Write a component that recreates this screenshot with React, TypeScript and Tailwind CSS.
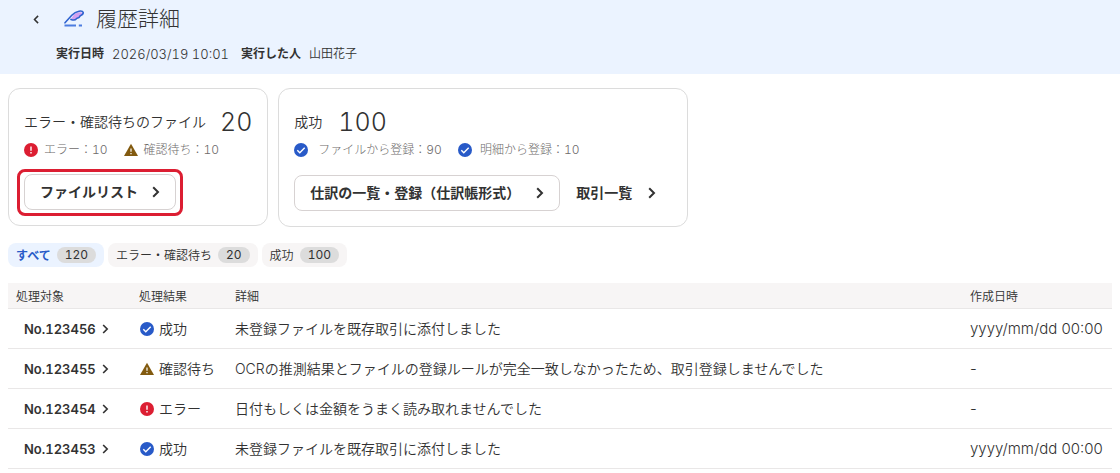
import React from 'react'

type Status = 'success' | 'waiting' | 'error'

const tabs = [
  { label: 'すべて', count: 120, active: true },
  { label: 'エラー・確認待ち', count: 20, active: false },
  { label: '成功', count: 100, active: false },
]

const rows: { no: string; status: Status; detail: string; date: string }[] = [
  { no: 'No.123456', status: 'success', detail: '未登録ファイルを既存取引に添付しました', date: 'yyyy/mm/dd 00:00' },
  { no: 'No.123455', status: 'waiting', detail: 'OCRの推測結果とファイルの登録ルールが完全一致しなかったため、取引登録しませんでした', date: '-' },
  { no: 'No.123454', status: 'error', detail: '日付もしくは金額をうまく読み取れませんでした', date: '-' },
  { no: 'No.123453', status: 'success', detail: '未登録ファイルを既存取引に添付しました', date: 'yyyy/mm/dd 00:00' },
]

const statusLabels: Record<Status, string> = {
  success: '成功',
  waiting: '確認待ち',
  error: 'エラー',
}

function StatusIcon({ status }: { status: Status }) {
  if (status === 'success') {
    return (
      <svg viewBox="0 0 14 14" className="size-3.5 shrink-0" aria-hidden="true">
        <circle cx="7" cy="7" r="7" fill="#285ac8" />
        <path d="M3.3 7.2 5.8 9.7 10.7 4.8" fill="none" stroke="#fff" strokeWidth="1.4" />
      </svg>
    )
  }
  if (status === 'waiting') {
    return (
      <svg viewBox="0 0 14 14" className="size-3.5 shrink-0" aria-hidden="true">
        <path d="M7 .8 14 13H0Z" fill="#825a0f" />
        <path d="M7 5.6V8.7M7 9.9V11.2" stroke="#fff" strokeWidth="1.2" />
      </svg>
    )
  }
  return (
    <svg viewBox="0 0 14 14" className="size-3.5 shrink-0" aria-hidden="true">
      <circle cx="7" cy="7" r="7" fill="#dc1e32" />
      <path d="M7 3.5V7.7M7 9.1V10.5" stroke="#fff" strokeWidth="1.4" />
    </svg>
  )
}

function Chevron({ className }: { className: string }) {
  return (
    <svg viewBox="0 0 8 12" className={className} fill="none" stroke="currentColor" strokeWidth="2" aria-hidden="true">
      <path d="M1.2 1.2 6 6 1.2 10.8" />
    </svg>
  )
}

function FeatherIcon() {
  return (
    <svg viewBox="0 0 20 18" className="w-5 h-[18px]" fill="none" aria-hidden="true">
      <path
        d="M7.2 8.8C8.6 7.6 9 4.2 12.6 3C14.4 2.300 17.600 2 18.600 3C19.300 4 18 5.200 16.600 5.700C15.400 6.200 15.700 7 14.700 7.700C13.700 8.400 12.900 8 12.200 9C11.200 10.300 9 10.200 7.200 8.800Z"
        fill="#d2a0f0"
      />
      <path
        d="M1 12.800 7.800 5.300C9.600 3.300 12 1.700 15 1.200C17 .9 18.700.9 19.100 2.200C19.500 3.700 18.200 4.900 16.800 5.400C15.500 5.900 15.800 6.900 14.800 7.600C13.800 8.300 13 7.900 12.300 8.900C11.200 10.400 9.200 10.300 7 9.400"
        stroke="#2f62cf"
        strokeWidth="1.6"
        strokeLinecap="round"
        strokeLinejoin="round"
      />
      <path d="M.5 15.500H12M14.800 15.500H18" stroke="#4c7ce0" strokeWidth="2" />
    </svg>
  )
}

export default function App() {
  return (
    <div className="min-h-screen bg-white text-[#323232] tabular-nums font-['Inter','Noto_Sans_CJK_JP',sans-serif]">
      <header className="bg-[#ebf3ff] pt-[5px] pb-[11px]">
        <div className="flex items-center pl-8">
          <button type="button" aria-label="戻る" className="flex w-8 pl-px">
            <Chevron className="w-1.5 h-[9px] rotate-180" />
          </button>
          <FeatherIcon />
          <h1 className="ml-3 text-[21px] leading-7 font-light">履歴詳細</h1>
        </div>
        <dl className="mt-3 flex gap-3 pl-14 text-xs leading-[18px]">
          <div className="flex gap-2">
            <dt className="font-bold">実行日時</dt>
            <dd className="text-[13px] font-light">2026/03/19 10:01</dd>
          </div>
          <div className="flex gap-2">
            <dt className="font-bold">実行した人</dt>
            <dd className="font-[350]">山田花子</dd>
          </div>
        </dl>
      </header>

      <main className="px-2 pt-3.5">
        <div className="flex flex-wrap items-start gap-2.5">
          {/* エラー・確認待ち */}
          <section className="rounded-xl border border-[#dcdcdc] px-[15px] pt-[17px] pb-[9px]">
            <div className="flex items-center gap-3.5">
              <h2 className="text-sm font-[350]">エラー・確認待ちのファイル</h2>
              <span className="text-[25px] leading-8 font-light">20</span>
            </div>
            <ul className="mt-0.5 flex gap-4 text-xs leading-5 font-light text-[#6e6b6b]">
              <li className="flex items-center gap-1.5">
                <StatusIcon status="error" />
                <span>エラー：10</span>
              </li>
              <li className="flex items-center gap-1.5">
                <StatusIcon status="waiting" />
                <span>確認待ち：10</span>
              </li>
            </ul>
            <div className="-ml-[7px] mt-[9px] inline-block rounded-lg border-3 border-[#dc1e32] px-1 pt-0.5 pb-[3px]">
              <a href="#files" className="flex h-9 items-center gap-3.5 rounded-lg border border-[#d7d2d2] px-[15px] text-sm font-bold">
                ファイルリスト
                <Chevron className="w-2 h-3" />
              </a>
            </div>
          </section>

          {/* 成功 */}
          <section className="rounded-xl border border-[#dcdcdc] px-[15px] pt-[17px] pb-[15px]">
            <div className="flex items-center gap-4">
              <h2 className="text-sm font-[350]">成功</h2>
              <span className="text-[25px] leading-8 font-light">100</span>
            </div>
            <ul className="mt-0.5 flex gap-4 text-xs leading-5 font-light text-[#6e6b6b]">
              <li className="flex items-center gap-2.5">
                <StatusIcon status="success" />
                <span>ファイルから登録：90</span>
              </li>
              <li className="flex items-center gap-2">
                <StatusIcon status="success" />
                <span>明細から登録：10</span>
              </li>
            </ul>
            <div className="mt-[15px] flex text-sm font-bold">
              <a href="#journals" className="flex h-9 items-center gap-4 rounded-lg border border-[#d7d2d2] px-[15px]">
                仕訳の一覧・登録（仕訳帳形式）
                <Chevron className="w-2 h-3" />
              </a>
              <a href="#deals" className="flex h-9 items-center gap-4 px-4">
                取引一覧
                <Chevron className="w-2 h-3" />
              </a>
            </div>
          </section>
        </div>

        <div className="mt-4 flex gap-1">
          {tabs.map((tab) => (
            <button
              key={tab.label}
              type="button"
              className={`flex h-6 items-center gap-1.5 rounded-lg px-2 text-xs ${
                tab.active ? 'bg-[#ebf3ff] font-bold text-[#285ac8]' : 'bg-[#f7f5f5] font-[350]'
              }`}
            >
              <span className="pt-0.5">{tab.label}</span>
              <span className="rounded-full bg-[#dcdcdc] px-2 text-xs leading-4 font-normal text-[#323232]">{tab.count}</span>
            </button>
          ))}
        </div>

        <table className="mt-4 w-full table-fixed text-left text-sm">
          <colgroup>
            <col className="w-[123px]" />
            <col className="w-24" />
            <col />
            <col className="w-[150px]" />
          </colgroup>
          <thead>
            <tr className="h-[25px] border-b border-[#e9e7e7] bg-[#f7f5f5] text-xs">
              <th className="px-2 pt-1 font-[350]">処理対象</th>
              <th className="px-2 pt-1 font-[350]">処理結果</th>
              <th className="px-2 pt-1 font-[350]">詳細</th>
              <th className="px-2 pt-1 font-[350]">作成日時</th>
            </tr>
          </thead>
          <tbody>
            {rows.map((row) => (
              <tr key={row.no} className="h-10 border-b border-[#e9e7e7] font-[350]">
                <td className="pt-0.5 pl-4">
                  <a href="#detail" className="flex items-center gap-1.5 text-[13px] font-semibold">
                    {row.no}
                    <Chevron className="w-[7px] h-2.5" />
                  </a>
                </td>
                <td className="pt-px pl-[9px]">
                  <span className="flex items-center gap-[5px] whitespace-nowrap">
                    <StatusIcon status={row.status} />
                    {statusLabels[row.status]}
                  </span>
                </td>
                <td className="px-2 pt-px">{row.detail}</td>
                <td className="pt-px pl-2 text-[15px] font-light normal-nums whitespace-nowrap">{row.date}</td>
              </tr>
            ))}
          </tbody>
        </table>
      </main>
    </div>
  )
}
